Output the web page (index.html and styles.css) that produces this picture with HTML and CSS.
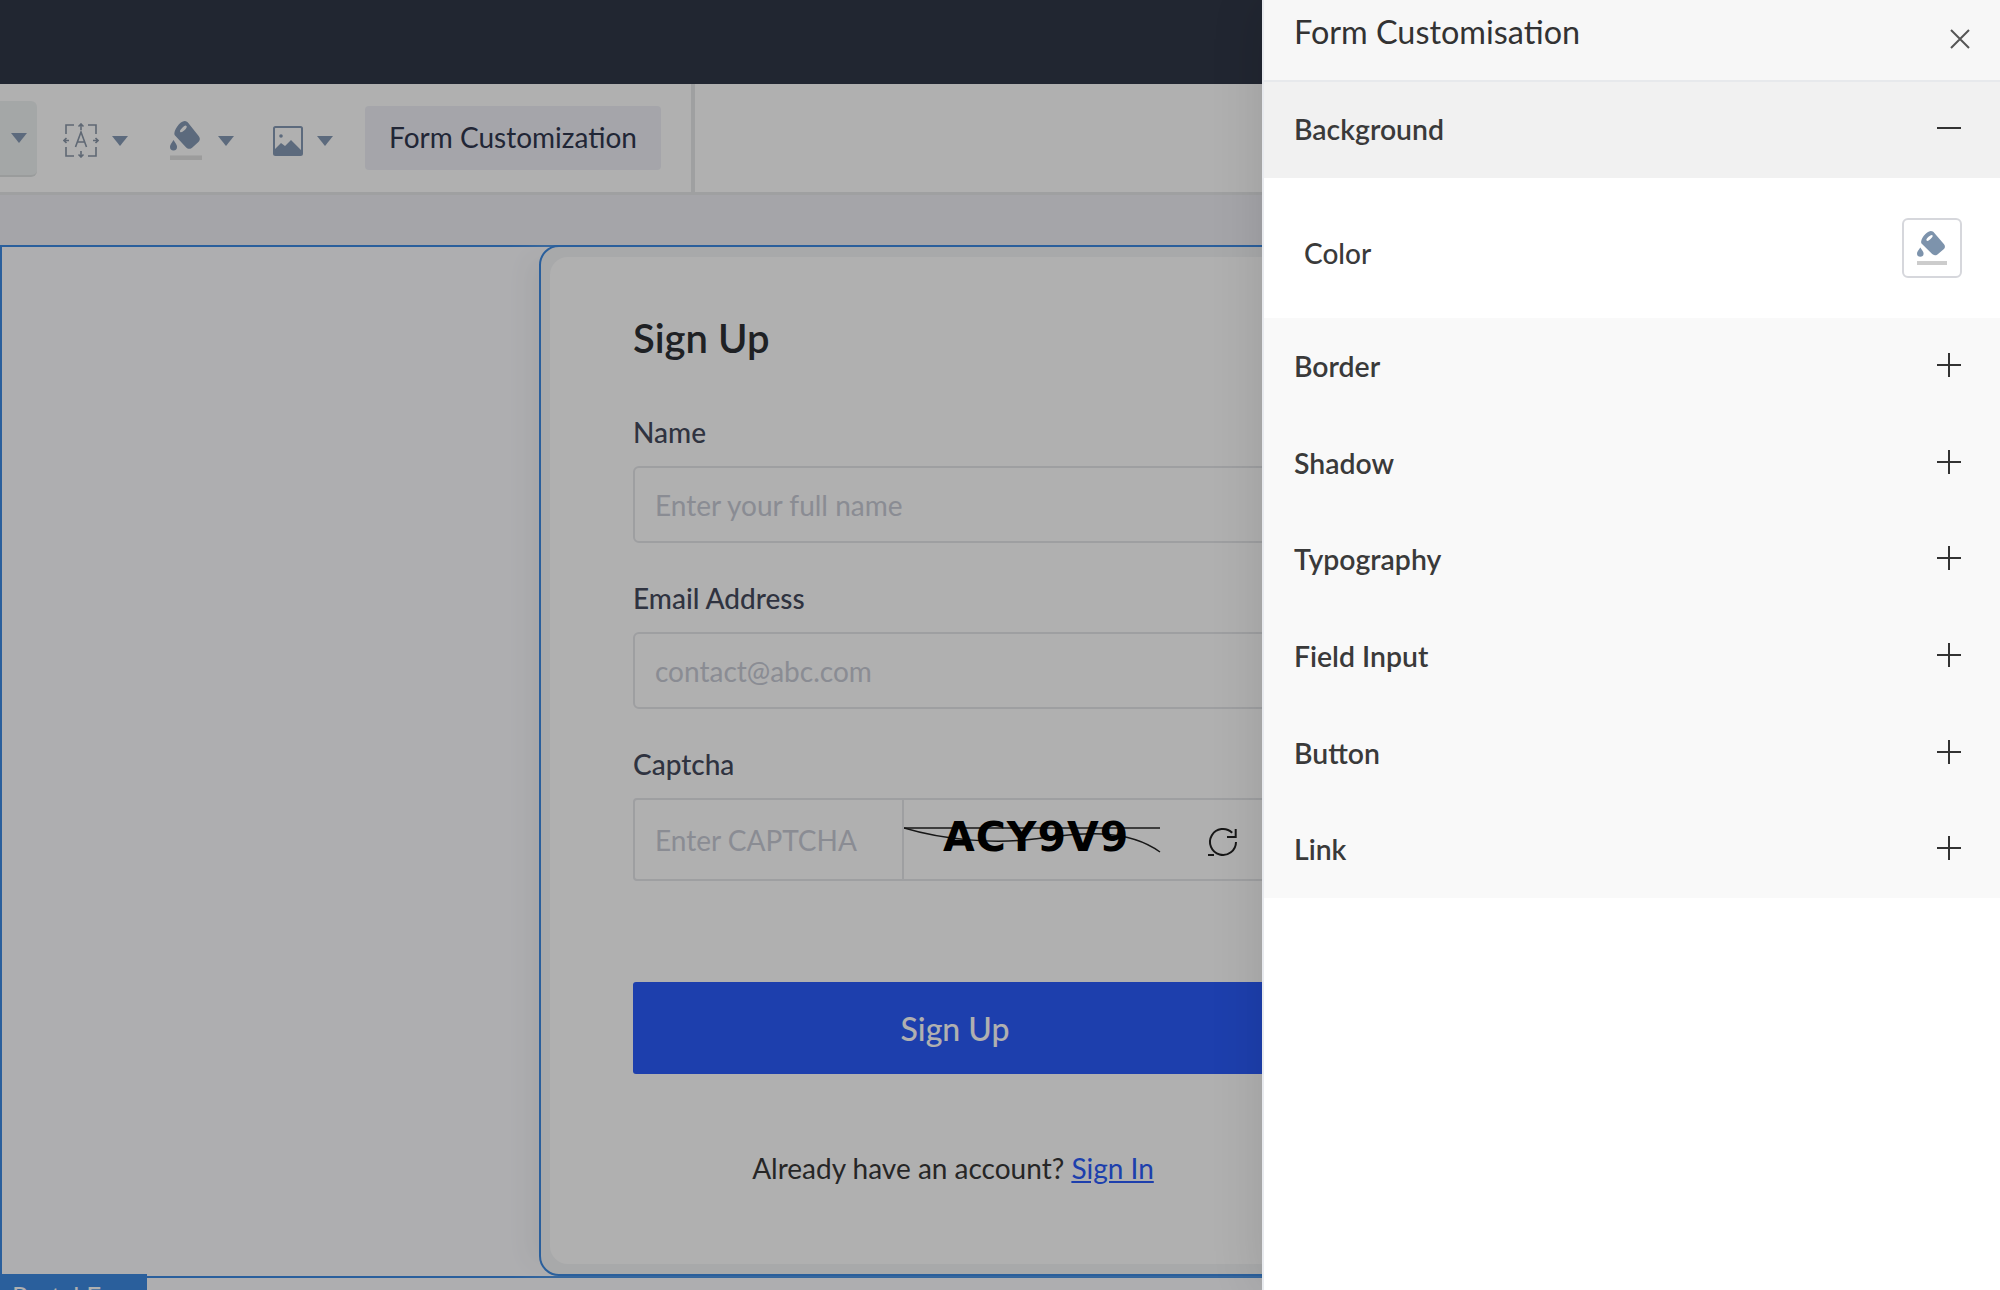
FILE: index.html
```html
<!DOCTYPE html>
<html lang="en">
<head>
    <meta charset="UTF-8">
    <meta name="viewport" content="width=device-width, initial-scale=1.0">
    <title>Form Customisation</title>
    <link rel="stylesheet" href="styles.css">
</head>
<body>
    <div class="page">
        <div class="topbar"></div>
        <div class="toolbar">
            <div class="tool-first"><span class="caret"></span></div>
            <div class="tool tool-text">
                <svg width="36" height="35" viewBox="0 0 36 35" fill="none" stroke="#8a97a8" stroke-width="1.6">
                    <path d="M3 11V2h8M33 11V2h-8M3 24v9h8M33 24v9h-8"/>
                    <path d="M18 1v6M15.500 3.500 18 1l2.500 2.500M18 28v6M15.500 31.500 18 34l2.500-2.500M1 17.500h5M3.500 15 1 17.500 3.500 20M30 17.500h5M32.500 15l2.500 2.500-2.500 2.500"/>
                    <path d="M12.500 24 18 9l5.500 15M14.500 19h7"/>
                </svg>
                <span class="caret"></span>
            </div>
            <div class="tool tool-fill">
                <svg width="32" height="39" viewBox="0 0 91 103" preserveAspectRatio="none">
                    <path d="M13 37C9 26 28 0 42 0c5 0 8 3 10 5l30 35c5 6 3 12-2 16L62 71c-6 4-12 3-16-1z" fill="#869ab5"/>
                    <ellipse cx="38" cy="21" rx="12" ry="4.500" transform="rotate(-42 38 21)" fill="#fff"/>
                    <path d="M10 50c6 9 10 13 10 18a10 10 0 0 1-20 0c0-5 4-9 10-18z" fill="#869ab5"/>
                    <rect x="0" y="91" width="91" height="12" fill="#e2e2e2"/>
                </svg>
                <span class="caret"></span>
            </div>
            <div class="tool tool-image">
                <svg width="30" height="30" viewBox="0 0 30 30">
                    <rect x="1" y="1" width="28" height="28" rx="1.500" fill="#fff" stroke="#869ab5" stroke-width="2"/>
                    <path d="M1 29v-5l7-7 4 3 6-6 11 11v4z" fill="#869ab5"/>
                    <circle cx="8" cy="10" r="1.800" fill="#869ab5"/>
                </svg>
                <span class="caret"></span>
            </div>
            <div class="form-tab">Form Customization</div>
            <div class="tool-sep"></div>
        </div>
        <div class="band"></div>
        <div class="canvas">
            <div class="frame">
                <div class="card">
                    <h2>Sign Up</h2>
                    <label>Name</label>
                    <div class="input">Enter your full name</div>
                    <label>Email Address</label>
                    <div class="input">contact@abc.com</div>
                    <label>Captcha</label>
                    <div class="captcha">
                        <div class="captcha-input">Enter CAPTCHA</div>
                        <div class="captcha-image">
                            <svg class="captcha-lines" width="260" height="34" viewBox="0 0 260 34" fill="none" stroke="#222" stroke-width="1.500">
                                <path d="M0 4H256"/>
                                <path d="M0 4C40 16 90 20 130 15S220 2 256 28"/>
                            </svg>
                            <span class="captcha-text">ACY9V9</span>
                        </div>
                        <svg class="refresh" width="32" height="32" viewBox="0 0 32 32" fill="none" stroke="#222" stroke-width="2">
                            <path d="M29 16A13 13 0 1 1 25.200 6.800"/>
                            <path d="M28.700 3v8H20"/>
                            <path d="M1 29h6"/>
                        </svg>
                    </div>
                    <div class="submit">Sign Up</div>
                    <p class="signin">Already have an account? <a href="#">Sign In</a></p>
                </div>
            </div>
            <div class="portal-tab">Portal Form</div>
        </div>
        <div class="page-foot"></div>
    </div>

    <div class="backdrop"></div>

    <aside class="panel">
        <header class="panel-head">
            <span>Form Customisation</span>
            <svg width="20" height="20" viewBox="0 0 20 20" stroke="#555" stroke-width="2"><path d="M1 1l18 18M19 1 1 19"/></svg>
        </header>
        <div class="row row-open">
            <span>Background</span>
            <svg width="24" height="24" viewBox="0 0 24 24" stroke="#333" stroke-width="2"><path d="M0 12h24"/></svg>
        </div>
        <div class="row-body">
            <span>Color</span>
            <button class="swatch">
                <svg width="30" height="34" viewBox="0 0 91 103" preserveAspectRatio="none">
                    <path d="M13 37C9 26 28 0 42 0c5 0 8 3 10 5l30 35c5 6 3 12-2 16L62 71c-6 4-12 3-16-1z" fill="#7d93ac"/>
                    <ellipse cx="38" cy="21" rx="12" ry="4.500" transform="rotate(-42 38 21)" fill="#fff"/>
                    <path d="M10 50c6 9 10 13 10 18a10 10 0 0 1-20 0c0-5 4-9 10-18z" fill="#7d93ac"/>
                    <rect x="0" y="91" width="91" height="12" fill="#cccccc"/>
                </svg>
            </button>
        </div>
        <div class="rows">
            <div class="row"><span>Border</span><svg width="24" height="24" viewBox="0 0 24 24" stroke="#333" stroke-width="2"><path d="M0 12h24M12 0v24"/></svg></div>
            <div class="row"><span>Shadow</span><svg width="24" height="24" viewBox="0 0 24 24" stroke="#333" stroke-width="2"><path d="M0 12h24M12 0v24"/></svg></div>
            <div class="row"><span>Typography</span><svg width="24" height="24" viewBox="0 0 24 24" stroke="#333" stroke-width="2"><path d="M0 12h24M12 0v24"/></svg></div>
            <div class="row"><span>Field Input</span><svg width="24" height="24" viewBox="0 0 24 24" stroke="#333" stroke-width="2"><path d="M0 12h24M12 0v24"/></svg></div>
            <div class="row"><span>Button</span><svg width="24" height="24" viewBox="0 0 24 24" stroke="#333" stroke-width="2"><path d="M0 12h24M12 0v24"/></svg></div>
            <div class="row"><span>Link</span><svg width="24" height="24" viewBox="0 0 24 24" stroke="#333" stroke-width="2"><path d="M0 12h24M12 0v24"/></svg></div>
        </div>
    </aside>
</body>
</html>
```

FILE: styles.css
```css
* {
    box-sizing: border-box;
}
html, body {
    margin: 0;
    height: 1290px;
    overflow: hidden;
}
body {
    font-family: "Lato", sans-serif;
    color: #222;
    position: relative;
}
.page {
    height: 1290px;
    display: flex;
    flex-direction: column;
    background-color: #eff0f5;
}
.topbar {
    height: 84px;
    background-color: #313848;
}
.toolbar {
    height: 111px;
    display: flex;
    align-items: center;
    background-color: #ffffff;
    border-bottom: 3px solid #e6e8ea;
}
.tool-first {
    width: 37px;
    height: 76px;
    margin-top: 2px;
    display: flex;
    align-items: center;
    justify-content: flex-end;
    padding-right: 10px;
    background-color: #eef2f2;
    border-radius: 0 6px 6px 0;
    border-bottom: 2px solid #dfe3e3;
}
.tool {
    display: flex;
    align-items: center;
    margin-top: 5px;
}
.tool-text {
    gap: 13px;
    margin-left: 26px;
}
.tool-fill {
    gap: 16px;
    margin-left: 42px;
}
.tool-image {
    gap: 14px;
    margin-left: 39px;
}
.caret {
    width: 0;
    height: 0;
    border-left: 8px solid transparent;
    border-right: 8px solid transparent;
    border-top: 10px solid #869ab5;
}
.form-tab {
    width: 296px;
    height: 64px;
    margin-left: 32px;
    padding-bottom: 2px;
    display: flex;
    align-items: center;
    justify-content: center;
    font-size: 28px;
    color: #31374f;
    background-color: #eff0f6;
    border-radius: 4px;
}
.tool-sep {
    width: 4px;
    height: 108px;
    margin-left: 30px;
    background-color: #e6e8ea;
}
.band {
    height: 50px;
}
.canvas {
    position: relative;
    height: 1033px;
    background-color: #fcfcff;
    border: 2px solid #3d8ae2;
    border-right: 0;
}
.page-foot {
    height: 12px;
    background-color: #fcfcff;
}
.frame {
    position: absolute;
    left: 537px;
    top: -2px;
    width: 1000px;
    height: 1031px;
    padding: 10px 0 10px 9px;
    background-color: #f4f5f7;
    border: 2px solid #3d8ae2;
    border-radius: 20px 0 0 20px;
    box-shadow: -24px 0 24px -14px #f0f1f4;
}
.card {
    height: 100%;
    padding: 57px 0 0 83px;
    background-color: #ffffff;
    border-radius: 18px 0 0 18px;
}
.card h2 {
    margin: 0 0 53px;
    font-size: 40px;
    line-height: 48px;
    font-weight: 600;
    color: #2d3035;
}
.card label {
    display: block;
    margin-bottom: 17px;
    font-size: 28px;
    line-height: 34px;
    font-weight: 500;
    color: #454a5d;
}
.input {
    width: 640px;
    height: 77px;
    margin-bottom: 38px;
    padding-left: 20px;
    display: flex;
    align-items: center;
    font-size: 28px;
    color: #c8cbd6;
    border: 2px solid #e5e6ea;
    border-radius: 6px;
}
.captcha {
    width: 640px;
    height: 83px;
    display: flex;
    align-items: center;
    border: 2px solid #e5e6ea;
    border-radius: 4px;
}
.captcha-input {
    width: 269px;
    height: 100%;
    padding-left: 20px;
    display: flex;
    align-items: center;
    font-size: 28px;
    color: #c8cbd6;
    border-right: 2px solid #e5e6ea;
}
.captcha-image {
    position: relative;
    width: 261px;
    height: 100%;
}
.captcha-lines {
    position: absolute;
    left: 0;
    top: 24px;
}
.captcha-text {
    position: absolute;
    left: 39px;
    top: 14px;
    font-family: "DejaVu Sans", sans-serif;
    font-size: 41px;
    line-height: 46px;
    letter-spacing: 1px;
    font-weight: 700;
    color: #000;
}
.refresh {
    margin-left: 42px;
    margin-top: 5px;
}
.submit {
    width: 644px;
    height: 92px;
    margin-top: 101px;
    display: flex;
    align-items: center;
    justify-content: center;
    font-size: 32px;
    font-weight: 500;
    color: #fff;
    background-color: #2a5cfb;
    border-radius: 3px;
}
.signin {
    width: 640px;
    margin: 77px 0 0;
    text-align: center;
    font-size: 28px;
    line-height: 34px;
    color: #383838;
}
.signin a {
    color: #2a5cfb;
}
.portal-tab {
    position: absolute;
    left: -2px;
    top: 1027px;
    width: 147px;
    height: 18px;
    padding: 8px 0 0 12px;
    font-size: 26px;
    line-height: 30px;
    color: #fff;
    background-color: #3d8ae2;
}
.backdrop {
    position: absolute;
    inset: 0;
    background-color: rgba(0, 0, 0, 0.31);
}
.panel {
    position: absolute;
    top: 0;
    right: 0;
    width: 738px;
    height: 1290px;
    background-color: #ffffff;
    border-left: 2px solid #e8eaee;
    box-shadow: 0 0 50px rgba(0, 0, 0, 0.12);
}
.panel-head {
    height: 82px;
    display: flex;
    justify-content: space-between;
    padding: 13px 30px 0 30px;
    font-size: 32.4px;
    line-height: 38px;
    color: #333;
    background-color: #f7f7f7;
    border-bottom: 2px solid #e7e9ec;
}
.panel-head svg {
    margin-top: 16px;
}
.row {
    height: 96.6px;
    display: flex;
    align-items: center;
    justify-content: space-between;
    padding: 0 39px 0 30px;
    font-size: 28.4px;
    font-weight: 600;
    color: #3a3a3a;
}
.row svg {
    margin-top: -2px;
}
.row-open {
    height: 96px;
    padding-bottom: 2px;
    background-color: #f1f1f1;
}
.row-body {
    height: 140px;
    display: flex;
    align-items: center;
    justify-content: space-between;
    padding: 0 38px 0 40px;
    font-size: 28px;
    font-weight: 500;
    color: #3a3a3a;
}
.row-body span {
    margin-top: 10px;
}
.swatch {
    width: 60px;
    height: 60px;
    padding: 0;
    display: flex;
    align-items: center;
    justify-content: center;
    background-color: #fff;
    border: 2px solid #d6d7dc;
    border-radius: 6px;
}
.rows {
    background-color: #f9f9f9;
}
```
